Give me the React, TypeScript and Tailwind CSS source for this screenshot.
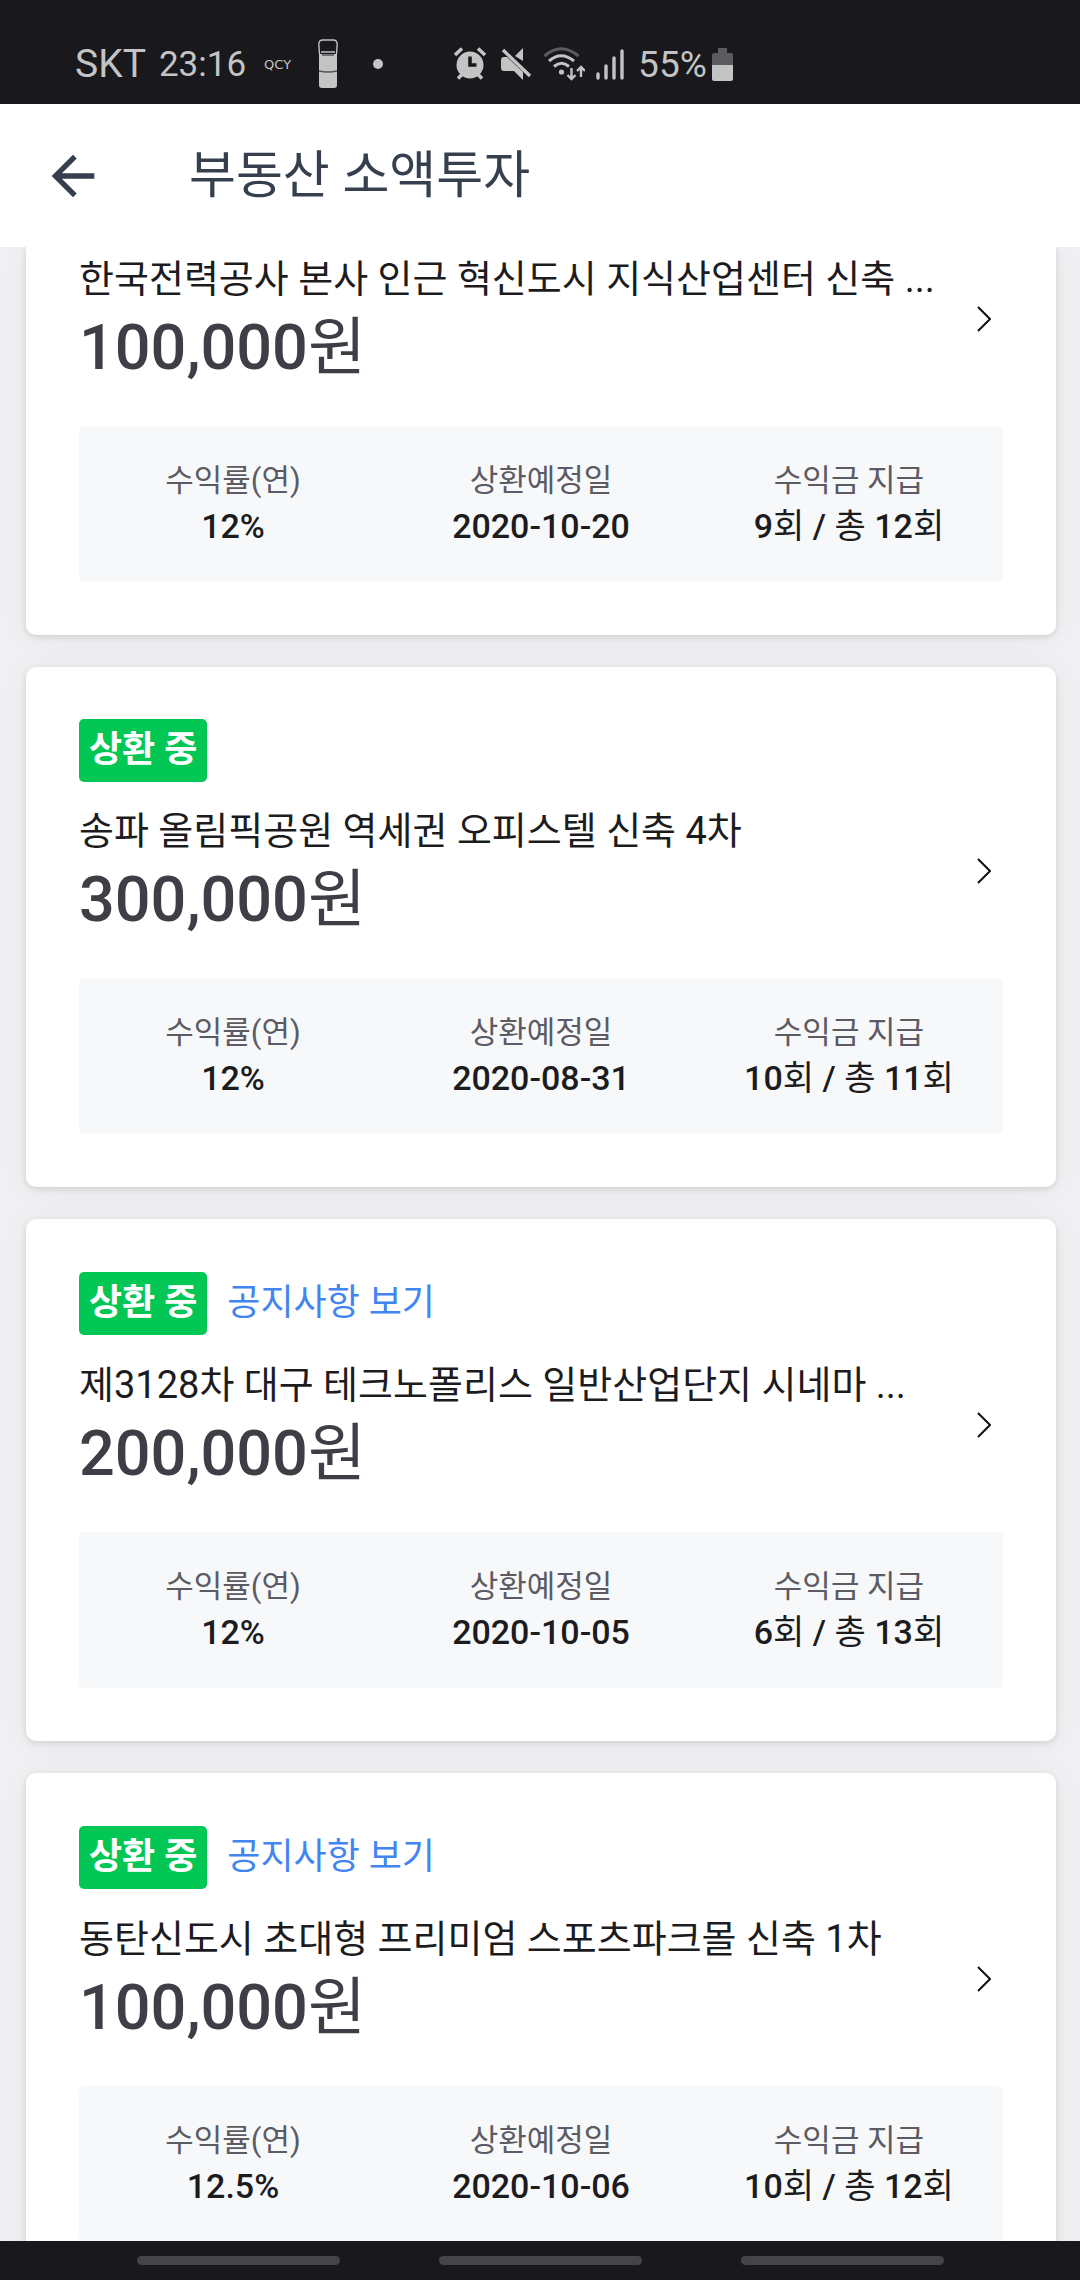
import React from 'react';

interface Investment {
  id: number;
  title: string;
  amount: string;
  rate: string;
  dueDate: string;
  payout: string;
  status?: string;
  hasNotice?: boolean;
}

const investments: Investment[] = [
  {
    id: 1,
    title: '한국전력공사 본사 인근 혁신도시 지식산업센터 신축 ...',
    amount: '100,000원',
    rate: '12%',
    dueDate: '2020-10-20',
    payout: '9회 / 총 12회',
  },
  {
    id: 2,
    title: '송파 올림픽공원 역세권 오피스텔 신축 4차',
    amount: '300,000원',
    rate: '12%',
    dueDate: '2020-08-31',
    payout: '10회 / 총 11회',
    status: '상환 중',
  },
  {
    id: 3,
    title: '제3128차 대구 테크노폴리스 일반산업단지 시네마 ...',
    amount: '200,000원',
    rate: '12%',
    dueDate: '2020-10-05',
    payout: '6회 / 총 13회',
    status: '상환 중',
    hasNotice: true,
  },
  {
    id: 4,
    title: '동탄신도시 초대형 프리미엄 스포츠파크몰 신축 1차',
    amount: '100,000원',
    rate: '12.5%',
    dueDate: '2020-10-06',
    payout: '10회 / 총 12회',
    status: '상환 중',
    hasNotice: true,
  },
];

const StatusIcons: React.FC = () => (
  <div className="flex items-center">
    {/* alarm */}
    <svg className="w-[34px] h-[34px]" viewBox="0 0 34 34" fill="none" stroke="currentColor" strokeWidth="3.6">
      <circle cx="17" cy="18" r="13.5" fill="currentColor" stroke="none" />
      <path d="M2 8l7-6.5M32 8l-7-6.5M5 31.5l4-4M29 31.5l-4-4" />
      <path d="M17 9.5v8.500h6.500" stroke="#19181d" strokeWidth="3.6" />
    </svg>
    {/* muted speaker */}
    <svg className="w-[30px] h-[34px] ml-[14px]" viewBox="0 0 30 34" fill="currentColor">
      <path d="M0 13q0-3 3-3h3l16 15v8l-9-9H3q-3 0-3-3zM22 1v13l-8-5z" />
      <path d="M2 3l27 26" stroke="currentColor" strokeWidth="3.4" />
    </svg>
    {/* wifi with traffic arrows */}
    <svg className="w-[42px] h-[34px] ml-[12px]" viewBox="0 0 42 34" fill="none" stroke="currentColor" strokeWidth="3">
      <path d="M1.500 9q16.500-14.500 34 0" stroke="#5c5b60" />
      <path d="M6 14q12-10.500 25 0M11 19.500q7.500-6.500 15 0" />
      <circle cx="18.5" cy="25" r="2.6" fill="currentColor" stroke="none" />
      <path d="M28.500 21v11M24.500 28l4 4 4-4M38 30V20M34 24l4-4 4 4" strokeWidth="2.4" />
    </svg>
    {/* signal */}
    <svg className="w-[28px] h-[34px] ml-[11px]" viewBox="0 0 28 34" stroke="currentColor" strokeWidth="3.4" strokeLinecap="round">
      <path d="M2 27v4M10 19v12M18 11v20M26 4v27" />
    </svg>
  </div>
);

const StatusBar: React.FC = () => (
  <div className="h-[104px] shrink-0 bg-[#19181d] text-[#c4c4c4] flex items-center pt-6 pl-[75px]">
    <span className="text-[39px] leading-none">SKT</span>
    <span className="text-[35px] leading-none ml-[13px]">23:16</span>
    <span className="text-[13px] leading-none ml-[18px] font-['DejaVu_Sans',sans-serif]">QCY</span>
    <svg className="w-[20px] h-[50px] ml-[27px]" viewBox="0 0 20 50">
      <path d="M1 15V46q0 3 3 3h12q3 0 3-3V15z" fill="currentColor" />
      <path d="M1.500 15L.8 5q.2-4 4-4h10.400q3.800 0 4 4L18.500 15M3 13h14" fill="none" stroke="currentColor" strokeWidth="1.4" />
      <path d="M4 16h12M1 32q9 2 18 0" fill="none" stroke="#55545a" strokeWidth="1.5" />
    </svg>
    <span className="w-[10px] h-[10px] rounded-full bg-current ml-[35px] mr-[70px]" />
    <StatusIcons />
    <span className="text-[37px] leading-none ml-[14px]">55%</span>
    <svg className="w-[21px] h-[33px] ml-[5px]" viewBox="0 0 21 33">
      <path d="M6 0h9v5h4q2 0 2 2v10H0V7q0-2 2-2h4z" fill="#5c5b60" />
      <path d="M0 17h21v14q0 2-2 2H2q-2 0-2-2z" fill="currentColor" />
    </svg>
  </div>
);

const Header: React.FC = () => (
  <header className="h-[143px] shrink-0 bg-white text-[#363f4d] flex items-center pl-[41px]">
    <button aria-label="뒤로" className="w-16 h-16">
      <svg className="w-16 h-16" viewBox="0 0 24 24" fill="currentColor">
        <path d="M20 11H7.830l5.590-5.590L12 4l-8 8 8 8 1.410-1.410L7.830 13H20v-2z" />
      </svg>
    </button>
    <h1 className="text-[51px] leading-[64px] ml-[84px]">부동산 소액투자</h1>
  </header>
);

// Digits are medium weight, the Hangul units next to them stay regular
const Figures: React.FC<{ text: string }> = ({ text }) => (
  <>
    {text.split(/([가-힣]+)/).map((part, i) => (
      <span key={i} className={i % 2 ? 'font-normal' : 'font-medium'}>
        {part}
      </span>
    ))}
  </>
);

const Stat: React.FC<{ label: string; value: string }> = ({ label, value }) => (
  <div>
    <dt className="text-[31px] leading-[44px] text-[#5c5b63]">{label}</dt>
    <dd className="text-[34px] leading-[46px] text-[#1c1c1e]">
      <Figures text={value} />
    </dd>
  </div>
);

const InvestmentCard: React.FC<{ investment: Investment }> = ({ investment }) => (
  <article
    className={`bg-white px-[53px] pb-[53px] shadow-[0_2px_6px_rgba(0,0,0,0.12),0_2px_36px_rgba(0,0,0,0.04)] ${
      investment.status ? 'rounded-[10px] pt-[52px]' : 'rounded-b-[10px] pt-[3px]'
    }`}
  >
    {investment.status && (
      <div className="flex items-center mb-5">
        <span className="bg-[#03c755] text-white text-[36px] leading-[63px] font-bold rounded-[5px] px-[10px]">
          {investment.status}
        </span>
        {investment.hasNotice && (
          <a href="#notice" className="text-[#4285f0] text-[36px] leading-[65px] ml-5">
            공지사항 보기
          </a>
        )}
      </div>
    )}

    <a href="#detail" className="flex items-center justify-between mb-[38px]">
      <div>
        <h2 className="text-[38px] leading-[58px] text-[#1c1c1e] whitespace-nowrap">{investment.title}</h2>
        <p className="text-[63px] leading-[80px] text-[#3f3d45]">
          <Figures text={investment.amount} />
        </p>
      </div>
      <svg className="w-[14px] h-[26px] mr-3" viewBox="0 0 14 26" fill="none" stroke="#111" strokeWidth="2">
        <path d="M1 1l12 12L1 25" />
      </svg>
    </a>

    <dl className="grid grid-cols-3 bg-[#f7f8fa] rounded-[5px] py-[33px] text-center">
      <Stat label="수익률(연)" value={investment.rate} />
      <Stat label="상환예정일" value={investment.dueDate} />
      <Stat label="수익금 지급" value={investment.payout} />
    </dl>
  </article>
);

const NavigationBar: React.FC = () => (
  <nav className="h-[39px] shrink-0 bg-[#19181d] flex items-center justify-center gap-[99px]">
    <button aria-label="최근 앱" className="w-[203px] h-[9px] rounded-full bg-[#454449]" />
    <button aria-label="홈" className="w-[203px] h-[9px] rounded-full bg-[#454449]" />
    <button aria-label="뒤로 가기" className="w-[203px] h-[9px] rounded-full bg-[#454449]" />
  </nav>
);

export default function App() {
  return (
    <div className="h-screen flex flex-col bg-[#f0f0f2] font-[Roboto,'Noto_Sans_CJK_KR',sans-serif]">
      <StatusBar />
      <Header />
      <main className="flex-1 min-h-0 overflow-hidden pl-[26px] pr-6">
        <div className="flex flex-col gap-8">
          {investments.map((investment) => (
            <InvestmentCard key={investment.id} investment={investment} />
          ))}
        </div>
      </main>
      <NavigationBar />
    </div>
  );
}
